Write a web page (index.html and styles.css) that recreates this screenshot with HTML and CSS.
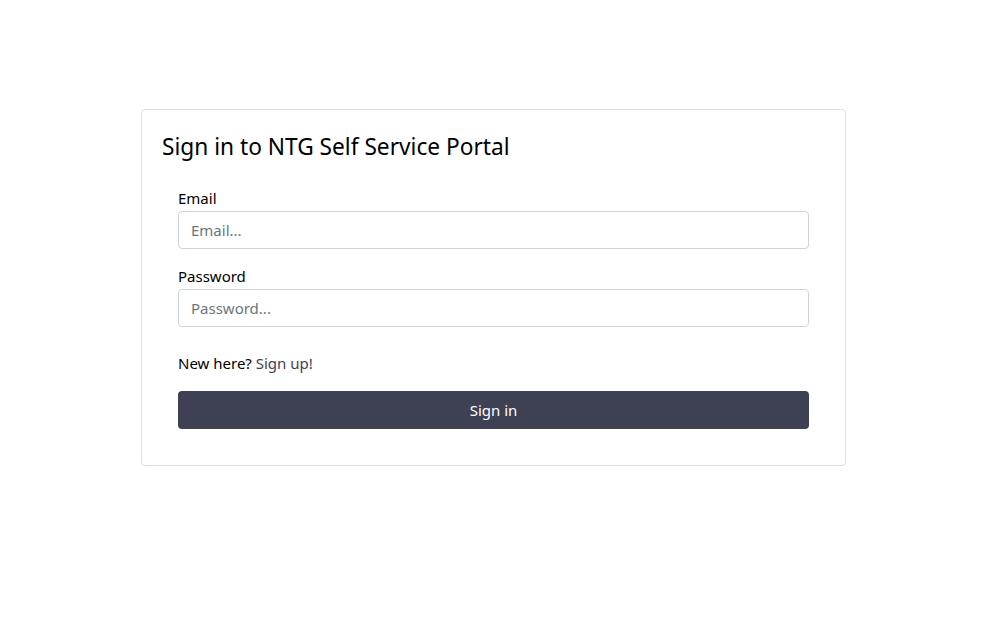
FILE: index.html
```html
<!DOCTYPE html>
<html lang="en">
<head>
<meta charset="utf-8">
<title>Sign in</title>
<link rel="stylesheet" href="styles.css">
</head>
<body>
<main class="page">
  <section class="card">
    <h4 class="card-title">Sign in to NTG Self Service Portal</h4>
    <form class="signin-form">
      <div class="form-group">
        <label for="email">Email</label>
        <input id="email" type="email" class="form-control" placeholder="Email...">
      </div>
      <div class="form-group">
        <label for="password">Password</label>
        <input id="password" type="password" class="form-control" placeholder="Password...">
      </div>
      <p class="signup">New here? <a href="#" class="signup-link">Sign up!</a></p>
      <button type="submit" class="btn">Sign in</button>
    </form>
  </section>
</main>
</body>
</html>
```
FILE: styles.css
```css
* { box-sizing: border-box; }
html, body { margin: 0; padding: 0; background: #fff; }
body {
  font-family: "Noto Sans", "Open Sans", "Liberation Sans", sans-serif;
  font-size: 16px;
  line-height: 1.5;
  color: #212529;
}
.page {
  padding: 109px 0 0 141px;
}
.card {
  width: 705px;
  border: 1px solid rgba(0,0,0,.125);
  border-radius: 4px;
  padding: 20px;
}
.card-title {
  margin: 0 0 24px;
  font-size: 22.7px;
  font-weight: 400;
  line-height: 33px;
  color: #000;
}
.signin-form {
  padding: 0 16px 16px;
}
.form-group {
  margin-bottom: 16px;
}
.form-group label {
  display: block;
  margin-bottom: 0;
  font-size: 15px;
  line-height: 24px;
  padding-bottom: 1px;
  margin-top: -1px;
  color: #000;
}
.form-control {
  display: block;
  width: 100%;
  height: 38px;
  padding: 6px 12px;
  border: 1px solid #ced4da;
  border-radius: 4px;
  font: inherit;
  font-size: 15px;
  color: #495057;
  background: #fff;
}
.form-control::placeholder { color: #6c757d; }
.signup {
  margin: 24px 0 16px;
  font-size: 15px;
  line-height: 24px;
  color: #000;
}
.signup-link {
  color: #3d4153;
  text-decoration: none;
}
.btn {
  display: block;
  width: 100%;
  height: 38px;
  border: 0;
  border-radius: 4px;
  background: #3d4153;
  color: #fff;
  font: inherit;
  font-size: 15px;
}
```
